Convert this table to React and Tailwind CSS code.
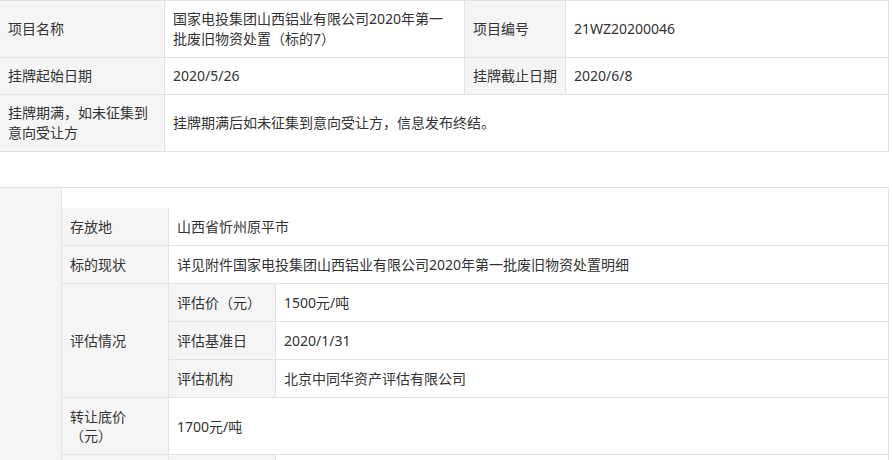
const FONT = { fontFamily: '"Noto Sans", "Noto Sans CJK SC", sans-serif' }

const label = 'bg-[#f5f5f5] border-r border-b border-[#e3e3e3] px-2 py-2 leading-5'
const value = 'bg-white border-r border-b border-[#e3e3e3] px-2 py-2 leading-5'

const label2 = 'bg-[#f5f5f5] border-r border-b border-[#e3e3e3] px-2 py-[9px] leading-[19px] flex items-center'
const value2 = 'bg-white border-r border-b border-[#e3e3e3] px-2 py-[9px] leading-[19px] flex items-center'

function BasicInfo() {
  return (
    <div className="grid grid-cols-[165px_300px_101px_323px] w-[889px] border-t border-[#e3e3e3]">
      <div className={label + ' flex items-center'}>项目名称</div>
      <div className={value}>
        国家电投集团山西铝业有限公司2020年第一<br />批废旧物资处置（标的7）
      </div>
      <div className={label + ' flex items-center'}>项目编号</div>
      <div className={value + ' flex items-center'}>21WZ20200046</div>

      <div className={label}>挂牌起始日期</div>
      <div className={value}>2020/5/26</div>
      <div className={label}>挂牌截止日期</div>
      <div className={value}>2020/6/8</div>

      <div className={label}>挂牌期满，如未征集到意向受让方</div>
      <div className={value + ' col-span-3 flex items-center'}>
        挂牌期满后如未征集到意向受让方，信息发布终结。
      </div>
    </div>
  )
}

function TargetInfo() {
  return (
    <div className="flex w-[889px] mt-[35px] border-t border-r border-[#e3e3e3]">
      <div className="w-[62px] shrink-0 bg-[#f5f5f5] border-r border-[#e3e3e3]" />
      <div className="flex-1">
        <div className="h-5" />
        <div className="grid grid-cols-[107px_107px_1fr]">
          <div className={label2}>存放地</div>
          <div className={value2 + ' col-span-2 border-r-0'}>山西省忻州原平市</div>

          <div className={label2}>标的现状</div>
          <div className={value2 + ' col-span-2 border-r-0'}>
            详见附件国家电投集团山西铝业有限公司2020年第一批废旧物资处置明细
          </div>

          <div className={label2 + ' row-span-3'}>评估情况</div>
          <div className={label2}>评估价（元）</div>
          <div className={value2 + ' border-r-0'}>1500元/吨</div>
          <div className={label2}>评估基准日</div>
          <div className={value2 + ' border-r-0'}>2020/1/31</div>
          <div className={label2}>评估机构</div>
          <div className={value2 + ' border-r-0'}>北京中同华资产评估有限公司</div>

          <div className={label2}>转让底价（元）</div>
          <div className={value2 + ' col-span-2 border-r-0'}>1700元/吨</div>

          <div className={label2 + ' h-[38px]'} />
          <div className={label2 + ' h-[38px]'} />
          <div className={value2 + ' h-[38px] border-r-0'} />
        </div>
      </div>
    </div>
  )
}

export default function App() {
  return (
    <div className="bg-white text-[#333] text-sm w-[892px] h-[460px] overflow-hidden" style={FONT}>
      <BasicInfo />
      <TargetInfo />
    </div>
  )
}
